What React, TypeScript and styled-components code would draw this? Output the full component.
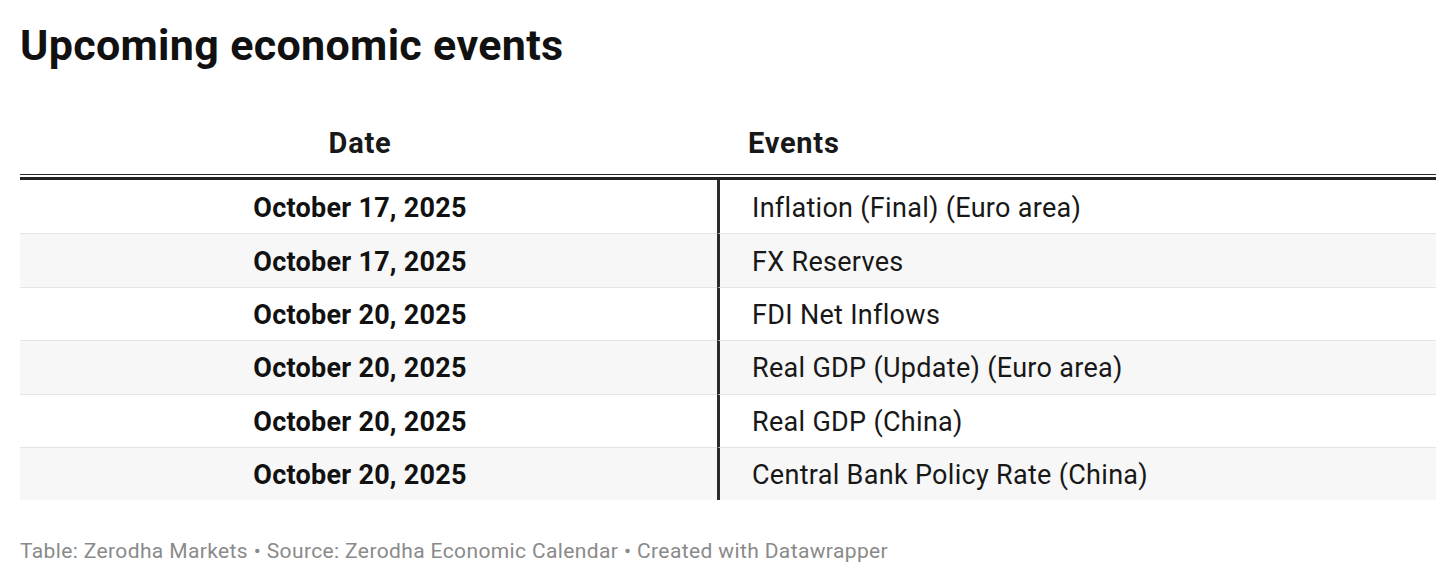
import { FC, Fragment } from 'react';
import styled, { createGlobalStyle } from 'styled-components';

const GlobalStyle = createGlobalStyle`
  body {
    margin: 0;
    background: #fff;
    font-family: Roboto, 'Liberation Sans', Arial, sans-serif;
    color: #181818;
  }
`;

const Page = styled.div`
  padding: 21px 20px 0 20px;
  width: 1416px;
`;

const Title = styled.h1`
  margin: 0;
  font-size: 43px;
  font-weight: 700;
  line-height: 49px;
  color: #111;
  letter-spacing: 0.33px;
`;

const Table = styled.div`
  margin-top: 47px;
  display: grid;
  grid-template-columns: 697px 1fr;
`;

const HeadCell = styled.div<{ $align: 'center' | 'left' }>`
  font-size: 29px;
  font-weight: 700;
  letter-spacing: 0.75px;
  color: #181818;
  height: 58px;
  box-sizing: border-box;
  padding-bottom: 6px;
  display: flex;
  align-items: center;
  justify-content: ${(p) => (p.$align === 'center' ? 'center' : 'flex-start')};
  padding-left: ${(p) => (p.$align === 'center' ? '0' : '31px')};
  padding-right: ${(p) => (p.$align === 'center' ? '17px' : '0')};
  border-bottom: 1px solid #2a2a2a;
`;

const HeadRule = styled.div`
  grid-column: 1 / -1;
  height: 3px;
  margin-top: 2px;
  background: #222;
`;

const DateCell = styled.div<{ $shade: boolean; $first: boolean }>`
  box-sizing: border-box;
  height: 53.4px;
  display: flex;
  align-items: center;
  justify-content: center;
  padding-right: 17px;
  padding-top: 2px;
  font-size: 27px;
  font-weight: 700;
  letter-spacing: 0.25px;
  color: #111;
  background: ${(p) => (p.$shade ? '#f7f7f7' : '#fff')};
  border-top: ${(p) => (p.$first ? 'none' : '1px solid #e4e4e4')};
`;

const EventCell = styled.div<{ $shade: boolean; $first: boolean }>`
  box-sizing: border-box;
  height: 53.4px;
  display: flex;
  align-items: center;
  padding-left: 32px;
  padding-top: 2px;
  font-size: 27px;
  font-weight: 400;
  letter-spacing: 0.3px;
  color: #181818;
  background: ${(p) => (p.$shade ? '#f7f7f7' : '#fff')};
  border-left: 3px solid #2b2b2b;
  border-top: ${(p) => (p.$first ? 'none' : '1px solid #e4e4e4')};
`;

const Footer = styled.div`
  margin-top: 39px;
  font-size: 21px;
  letter-spacing: 0.38px;
  color: #8a8a8a;
  line-height: 24px;
`;

const rows = [
  { date: 'October 17, 2025', event: 'Inflation (Final) (Euro area)' },
  { date: 'October 17, 2025', event: 'FX Reserves' },
  { date: 'October 20, 2025', event: 'FDI Net Inflows' },
  { date: 'October 20, 2025', event: 'Real GDP (Update) (Euro area)' },
  { date: 'October 20, 2025', event: 'Real GDP (China)' },
  { date: 'October 20, 2025', event: 'Central Bank Policy Rate (China)' },
];

const App: FC = () => {
  return (
    <>
      <GlobalStyle />
      <Page>
        <Title>Upcoming economic events</Title>
        <Table>
          <HeadCell $align="center">Date</HeadCell>
          <HeadCell $align="left">Events</HeadCell>
          <HeadRule />
          {rows.map((row, i) => (
            <Fragment key={i}>
              <DateCell $shade={i % 2 === 1} $first={i === 0}>
                {row.date}
              </DateCell>
              <EventCell $shade={i % 2 === 1} $first={i === 0}>
                {row.event}
              </EventCell>
            </Fragment>
          ))}
        </Table>
        <Footer>
          Table: Zerodha Markets • Source: Zerodha Economic Calendar • Created with Datawrapper
        </Footer>
      </Page>
    </>
  );
};

export default App;
